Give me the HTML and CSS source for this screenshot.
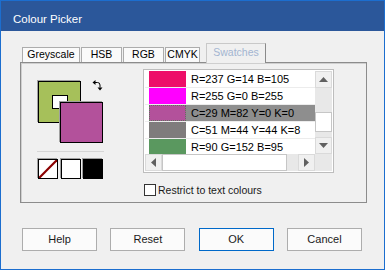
FILE: index.html
```html
<!DOCTYPE html>
<html>
<head>
<meta charset="utf-8">
<link rel="stylesheet" href="styles.css">
</head>
<body>
<div class="window">
  <div class="titlebar">Colour Picker</div>
  <div class="tabs">
    <div class="tab tab-grey">Greyscale</div>
    <div class="tab tab-hsb">HSB</div>
    <div class="tab tab-rgb">RGB</div>
    <div class="tab tab-cmyk">CMYK</div>
    <div class="tab tab-active">Swatches</div>
  </div>
  <div class="panel">
    <div class="left">
      <div class="wells">
        <div class="well well-primary"><div class="well-inner"></div></div>
        <div class="well well-secondary"></div>
        <svg class="swap" width="11" height="11" viewBox="0 0 11 11">
          <path d="M3 2.5 H5.5 Q8 2.5 8 5 V7.5" fill="none" stroke="#000" stroke-width="1"/>
          <path d="M0.5 2.5 L3.5 0 L3.5 5 Z" fill="#000"/>
          <path d="M5.5 7.5 L10.5 7.5 L8 10.5 Z" fill="#000"/>
        </svg>
      </div>
      <div class="sep"></div>
      <div class="minis">
        <div class="mini mini-none">
          <svg width="18" height="18" viewBox="0 0 18 18"><line x1="0" y1="18" x2="18" y2="0" stroke="#8b0000" stroke-width="2.2"/></svg>
        </div>
        <div class="mini mini-white"></div>
        <div class="mini mini-black"></div>
      </div>
    </div>
    <div class="right">
      <div class="listbox">
        <div class="listmain">
          <div class="rows">
            <div class="row"><div class="cell-swatch"><div class="swatch sw1"></div></div><div class="cell-text">R=237 G=14 B=105</div></div>
            <div class="row"><div class="cell-swatch"><div class="swatch sw2"></div></div><div class="cell-text">R=255 G=0 B=255</div></div>
            <div class="row row-selected"><div class="cell-swatch"><div class="swatch sw3"></div></div><div class="cell-text">C=29 M=82 Y=0 K=0</div></div>
            <div class="row"><div class="cell-swatch"><div class="swatch sw4"></div></div><div class="cell-text">C=51 M=44 Y=44 K=8</div></div>
            <div class="row"><div class="cell-swatch"><div class="swatch sw5"></div></div><div class="cell-text">R=90 G=152 B=95</div></div>
          </div>
          <div class="vscroll">
            <div class="sbtn"><svg width="9" height="5" viewBox="0 0 9 5"><path d="M0 5 L4.5 0 L9 5 Z" fill="#606060"/></svg></div>
            <div class="vtrack-a"></div>
            <div class="vthumb"></div>
            <div class="vtrack-b"></div>
            <div class="sbtn"><svg width="9" height="5" viewBox="0 0 9 5"><path d="M0 0 L4.5 5 L9 0 Z" fill="#606060"/></svg></div>
          </div>
        </div>
        <div class="hscroll">
          <div class="sbtn"><svg width="5" height="9" viewBox="0 0 5 9"><path d="M5 0 L0 4.5 L5 9 Z" fill="#606060"/></svg></div>
          <div class="hthumb"></div>
          <div class="htrack"></div>
          <div class="sbtn"><svg width="5" height="9" viewBox="0 0 5 9"><path d="M0 0 L5 4.5 L0 9 Z" fill="#606060"/></svg></div>
          <div class="corner"></div>
        </div>
      </div>
      <label class="check"><span class="checkbox"></span><span class="check-label">Restrict to text colours</span></label>
    </div>
  </div>
  <div class="buttons">
    <div class="btn">Help</div>
    <div class="btn">Reset</div>
    <div class="btn btn-default">OK</div>
    <div class="btn">Cancel</div>
  </div>
</div>
</body>
</html>
```
FILE: styles.css
```css
* { box-sizing: border-box; }
html, body { margin: 0; padding: 0; background: #f0f0f0; }
.window {
  width: 385px; height: 270px;
  border: 1px solid #1c6ecf;
  background: #f0f0f0;
  font-family: "Liberation Sans", Arial, sans-serif;
  color: #000;
  overflow: hidden;
}
.titlebar {
  height: 30px;
  background: #2b579a;
  color: #fff;
  font-size: 11.5px;
  line-height: 13px;
  padding: 12px 0 0 12px;
}
.tabs {
  display: flex;
  align-items: flex-end;
  height: 19px;
  margin-top: 12px;
  padding-left: 21px;
  gap: 1px;
  position: relative;
  z-index: 2;
}
.tab {
  height: 15px;
  border: 1px solid #acacac;
  border-bottom: none;
  background: #fafafa;
  font-size: 10.5px;
  line-height: 13px;
  text-align: center;
  white-space: nowrap;
}
.tab-grey { width: 58px; }
.tab-hsb { width: 41px; }
.tab-rgb { width: 41px; }
.tab-cmyk { width: 35px; }
.tab-active {
  width: 60px;
  height: 20px;
  margin-left: 5px;
  margin-bottom: -1px;
  background: #f0f0f0;
  border-color: #c9c9c9;
  border-right-color: #8a8a8a;
  color: #a3b5d1;
  line-height: 17px;
}
.panel {
  margin-left: 19px;
  width: 347px;
  height: 141px;
  border: 1px solid #8c8c8c;
  box-shadow: inset 1px 1px 0 #cfcfcf;
  display: flex;
  position: relative;
  z-index: 1;
}
.left {
  width: 122px;
  padding: 18px 0 0 16px;
  display: flex;
  flex-direction: column;
}
.wells { position: relative; width: 66px; height: 63px; }
.well {
  position: absolute;
  border: 1px solid #000;
  box-shadow: -1px -1px 0 #a0a0a0;
}
.well-primary { left: 1px; top: 0; width: 43px; height: 42px; background: #a6c05a; }
.well-secondary { left: 23px; top: 21px; width: 43px; height: 41px; background: #b3519b; }
.well-inner {
  position: absolute; left: 13px; top: 13px;
  width: 16px; height: 14px;
  background: #fff; border: 1px solid #000;
}
.swap { position: absolute; left: 55px; top: -1px; }
.sep { margin-top: 7px; width: 67px; height: 1px; background: #d6d6d6; }
.minis { display: flex; gap: 2.5px; margin-top: 7px; margin-left: 1px; }
.mini {
  width: 20px; height: 20px;
  border: 1px solid #000;
  box-shadow: -1px -1px 0 #a0a0a0;
  background: #fff;
}
.mini svg { display: block; }
.mini-black { background: #000; }
.right { width: 191px; padding-top: 6px; }
.listbox {
  width: 191px; height: 104px;
  border: 1px solid #bdbdbd;
  padding: 1px;
  background: #fff;
}
.listmain { display: flex; height: 83px; }
.rows { width: 170px; height: 83px; overflow: hidden; }
.row { display: flex; height: 17px; border-bottom: 1px solid #ececec; }
.cell-swatch { padding-left: 4px; width: 41px; }
.swatch { width: 37px; height: 16px; }
.sw1 { background: #ed0e69; }
.sw2 { background: #ff00ff; }
.sw3 { background: #b3519b; outline: 1px dotted #5c7a5c; outline-offset: -1px; }
.sw4 { background: #7f7c7c; }
.sw5 { background: #5a985f; }
.cell-text {
  flex: 1;
  padding-left: 5px;
  font-size: 11px;
  line-height: 16px;
  white-space: nowrap;
}
.row-selected .cell-text { background: #8e8e8e; }
.vscroll {
  width: 17px; height: 83px;
  background: #e8e8e8;
  display: flex; flex-direction: column;
}
.sbtn {
  width: 17px; height: 17px;
  flex: none;
  border: 1px solid #dadada;
  background: #f0f0f0;
  display: flex; align-items: center; justify-content: center;
}
.sbtn svg { display: block; }
.vtrack-a { height: 24px; }
.vthumb { height: 20px; background: #fff; border: 1px solid #c6c6c6; }
.vtrack-b { flex: 1; }
.hscroll { display: flex; height: 17px; background: #e8e8e8; }
.hthumb { width: 125px; background: #fff; border: 1px solid #c6c6c6; }
.htrack { flex: 1; }
.corner { width: 17px; background: #e8e8e8; }
.check {
  display: flex; align-items: center;
  margin-top: 11px; margin-left: 1px;
  height: 12px;
}
.checkbox {
  width: 12px; height: 12px;
  border: 1px solid #333;
  background: #fff;
}
.check-label { margin-left: 2px; font-size: 10.5px; color: #1a1a1a; }
.buttons {
  display: flex;
  justify-content: space-between;
  margin: 25px 0 0 21px;
  width: 340px;
}
.btn {
  width: 75px; height: 23px;
  border: 1px solid #adadad;
  background: #fbfbfb;
  font-size: 11px;
  line-height: 21px;
  text-align: center;
  color: #1a1a1a;
}
.btn-default { border-color: #0069c9; }
```
